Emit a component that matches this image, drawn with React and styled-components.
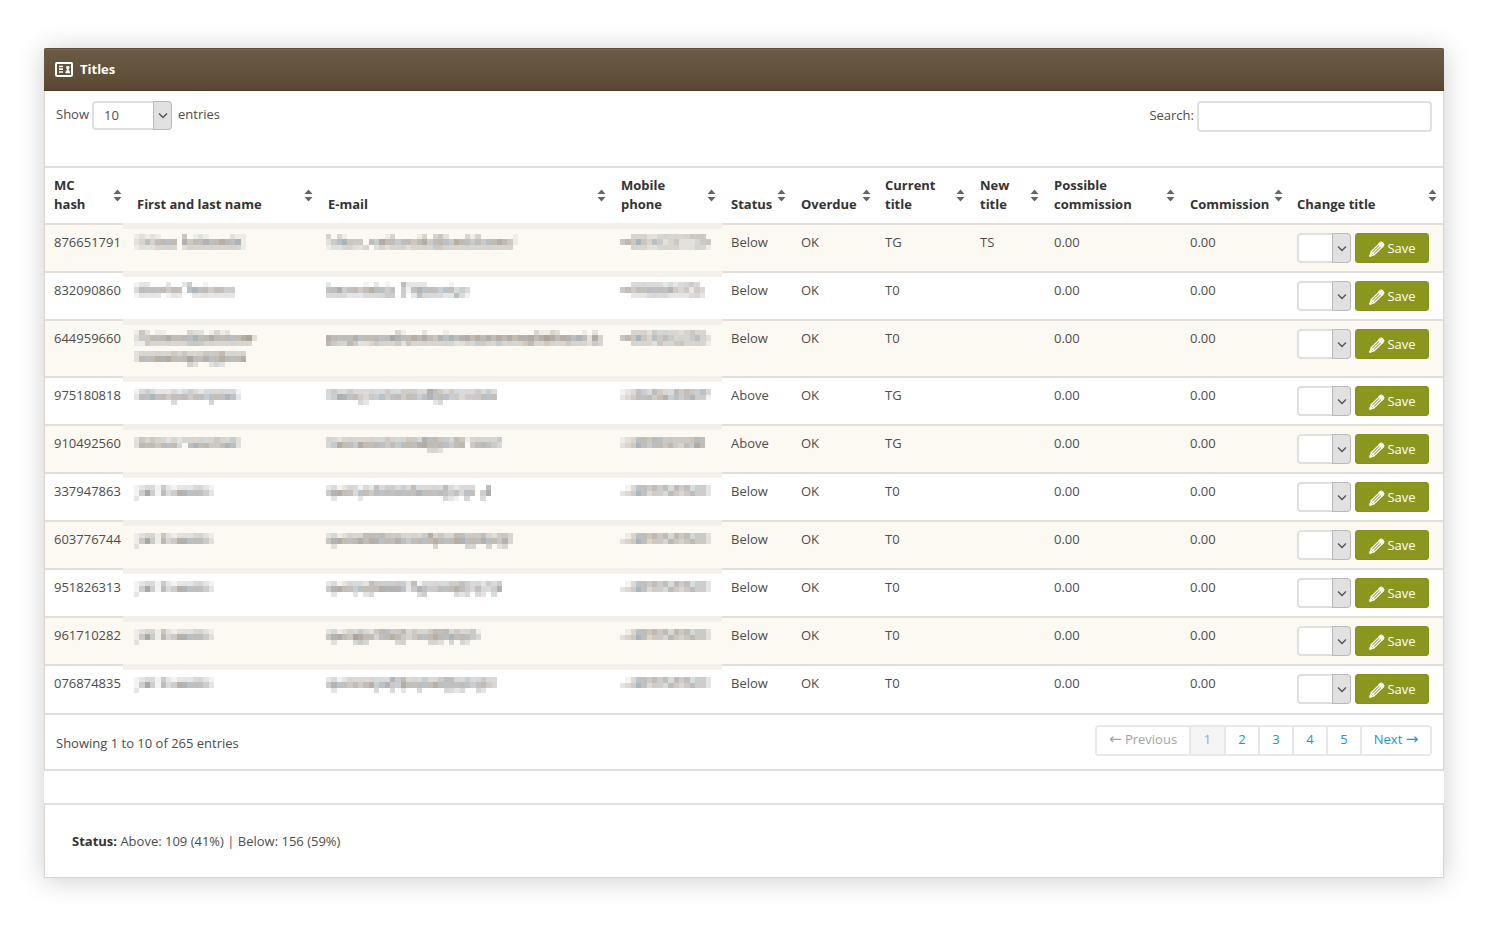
import React from "react";
import styled, { createGlobalStyle, css } from "styled-components";

const line = "#d9d2cd";
const softLine = "#e4deda";

const GlobalStyle = createGlobalStyle`
  * { box-sizing: border-box; }
  body {
    margin: 0;
    background: #fff;
    color: #4c4c4c;
    font-family: "Open Sans", "Noto Sans", sans-serif;
    font-size: 13px;
    line-height: 19px;
  }
`;

const Page = styled.main`
  padding: 48px 45px 51px 44px;
`;

const Sheet = styled.div`
  display: flex;
  flex-direction: column;
  gap: 32px;
  background: #fff;
  border-radius: 2px 2px 0 0;
  box-shadow: 0 2px 28px rgba(0, 0, 0, 0.2);
`;

const Panel = styled.section`
  border: 1px solid ${line};
  border-top: 0;
  border-bottom: 2px solid ${softLine};
`;

const PanelHeader = styled.header`
  display: flex;
  align-items: center;
  gap: 7px;
  height: 43px;
  margin: 0 -1px;
  padding: 0 11px 1px;
  color: #fff;
  background: linear-gradient(#6c5b46, #5a4932);
  border-top: 1px solid #5f4f3a;
  border-bottom: 1px solid #4c3c26;
  border-radius: 2px 2px 0 0;
  box-shadow: inset 0 1px 0 #776751;
`;

const PanelTitle = styled.h1`
  margin: 0;
  font-size: 13px;
  line-height: 19px;
  font-weight: 700;
`;

const Toolbar = styled.div`
  display: flex;
  justify-content: space-between;
  align-items: flex-start;
  height: 75px;
  padding: 10px 11px 0;
`;

const Field = styled.label`
  display: flex;
  align-items: flex-start;
  gap: 3px;
  line-height: ${(p) => p.$line}px;
  white-space: nowrap;
`;

const SearchInput = styled.input`
  width: 235px;
  height: 31px;
  padding: 4px 8px;
  border: 2px solid #e0e0e0;
  border-radius: 4px;
  background: #fff;
  color: inherit;
  font: inherit;
`;

const SelectBox = styled.span`
  display: inline-grid;
  width: ${(p) => p.$width}px;
  height: ${(p) => p.$height}px;
  margin-right: ${(p) => p.$after || 0}px;
  line-height: 19px;
`;

const Select = styled.select`
  grid-area: 1 / 1;
  appearance: none;
  width: 100%;
  height: 100%;
  padding: 0 20px 0 10px;
  border: 2px solid #e0e0e0;
  border-radius: 4px;
  background: #fff;
  color: inherit;
  font: inherit;
`;

const SelectArrow = styled.span`
  grid-area: 1 / 1;
  justify-self: end;
  display: flex;
  align-items: center;
  justify-content: center;
  width: 19px;
  border: 1px solid #b9b9b9;
  border-radius: 0 4px 4px 0;
  background: #e1e1e1;
  pointer-events: none;
`;

const Table = styled.table`
  width: 100%;
  table-layout: fixed;
  border-collapse: separate;
  border-spacing: 0;
  border-bottom: 2px solid ${softLine};
`;

const HeadCell = styled.th`
  height: 57px;
  padding: 8px 6px 9px 9px;
  border-top: 2px solid ${softLine};
  text-align: left;
  vertical-align: bottom;
  color: #333;
  font-weight: 700;
`;

const HeadContent = styled.div`
  display: flex;
  align-items: flex-end;
  justify-content: space-between;
  gap: 5px;
  height: 38px;
`;

const SortButton = styled.button`
  display: flex;
  flex: none;
  align-self: center;
  padding: 0;
  border: 0;
  background: none;
`;

const Row = styled.tr`
  height: ${(p) => (p.$tall ? 57 : 48)}px;
  background: ${(p) => (p.$odd ? "#fcf9f2" : "#fff")};
  &:last-child { height: 49px; }
`;

const Cell = styled.td`
  padding: 8px 0 0 9px;
  border-top: 2px solid ${softLine};
  vertical-align: top;
`;

const HiddenCell = styled(Cell)`
  position: relative;
  padding: ${(p) => (p.$low ? 11 : 9)}px 0 0 ${(p) => p.$indent}px;
  border-top-color: transparent;
  line-height: 0;
  &::before {
    content: "";
    position: absolute;
    top: -2px;
    left: 0;
    right: 0;
    height: 6px;
    background: #f3f0ec;
    ${(p) => p.$first && css`left: -5px;`}
  }
`;

const Mosaic = styled.svg`
  display: block;
  margin-bottom: 5px;
`;

const ChangeForm = styled.div`
  display: flex;
  gap: 4px;
`;

const SaveButton = styled.button`
  display: flex;
  align-items: center;
  justify-content: center;
  gap: 2px;
  width: 74px;
  height: 30px;
  padding: 0;
  border: 1px solid #83911a;
  border-radius: 3px;
  background: #8a961e;
  color: #fff;
  font: inherit;
`;

const Footer = styled.footer`
  display: flex;
  justify-content: space-between;
  align-items: flex-start;
  height: 54px;
  padding: 10px 11px 0;
`;

const Info = styled.p`
  margin: 0;
  padding-top: 9px;
`;

const Pager = styled.nav`
  display: flex;
  height: 31px;
  border: 2px solid #e8e8e8;
  border-radius: 4px;
  overflow: hidden;
`;

const PageLink = styled.a`
  width: ${(p) => p.$width}px;
  padding-top: 3px;
  text-align: center;
  white-space: nowrap;
  text-decoration: none;
  color: ${(p) => (p.$muted ? "#a3a3a3" : "#1b95d4")};
  background: ${(p) => (p.$current ? "#f5f5f5" : "#fff")};
  & + & { border-left: 2px solid #e8e8e8; }
`;

const Arrow = styled.span`
  font-family: "DejaVu Sans", sans-serif;
  font-size: 15px;
  line-height: 1;
`;

const Summary = styled.section`
  padding: 27px 27px 26px;
  border: 1px solid ${line};
  border-top: 2px solid ${softLine};
`;

const SummaryText = styled.p`
  margin: 0;
  strong { color: #333; }
`;

const columns = [
  ["MC hash", 83],
  ["First and last name", 191],
  ["E-mail", 293],
  ["Mobile phone", 110],
  ["Status", 70],
  ["Overdue", 84],
  ["Current title", 95],
  ["New title", 74],
  ["Possible commission", 136],
  ["Commission", 107],
  ["Change title", 155],
];

/* Each string is one line of blocks; a digit is the darkness of a block. */
const kowal = ["123314212223321", "147415346655542", "200000000000000"];
const phone = ["01355454535453442", "23465344354345442"];

const rows = [
  { id: "876651791", status: "Below", title: "TG", next: "TS",
    name: ["121210000401210000211", "235355550645565565561", "122233330233333333331"],
    mail: ["303100000001300001303420003130000001", "245644405465545545645554655454556541", "122332230232333233334433333333333330"],
    tel: ["00333223333334440", "45464354234222344", "00333223333222331"] },
  { id: "832090860", status: "Below", title: "T0",
    name: ["1220002002400100000", "3555554550565545544", "1222201220022222222"],
    mail: ["200000010201005222200001000", "556455456554504156555455343", "333322233334404025333322531"],
    tel: ["0033333323233430", "4545555556434243", "0022233332222332"] },
  { id: "644959660", tall: true, status: "Below", title: "T0",
    name: ["14201100003220131200000", "24455565555655655555672", "11433333334443333333330"],
    name2: ["233333343433344453333", "255566655575565565556", "000000000032002320000"],
    mail: ["0000000000000310002000100000000000000003113200001020", "6555565555557655656546565665656565656665676566565263", "5433542234333424333333332233443343333453343334333243"],
    tel: ["00333243333234330", "45464354543334532", "00333324334433331"] },
  { id: "975180818", low: true, status: "Above", title: "TG",
    name: ["13432223234323333331", "25565545554554555652", "00000003000000300000"],
    mail: ["343343333334334443365434333343430", "346655434454554554565554434445550", "000000320000000000002300000000000"],
    tel: ["12354354335454453", "23455545645456441"] },
  { id: "910492560", low: true, status: "Above", title: "TG",
    name: ["24343323233333343342", "25554555305655445652"],
    mail: ["332333333334333443655443541333334", "346554655554545556655554550455543", "000000000000000000033200000000000"],
    tel: ["1235545544444455", "2346545545435465"] },
  { id: "337947863", low: true, status: "Below", title: "T0", name: kowal,
    mail: ["2312331325344343533333532333005", "4665535545555555565555545355046", "0200002000000000000000321030030"], tel: phone },
  { id: "603776744", low: true, status: "Below", title: "T0", name: kowal,
    mail: ["23123335555444333346343355444532443", "46655565665556545555655566555655463", "02000000000000000000300000330030230"], tel: phone },
  { id: "951826313", low: true, status: "Below", title: "T0", name: kowal,
    mail: ["231233325444444251333334454332434", "466554555566665246544555654353346", "020002023000000003400000323032030"], tel: phone },
  { id: "961710282", low: true, status: "Below", title: "T0", name: kowal,
    mail: ["23123343245544534334555343341", "46654765535565434555655655543", "02000343000003300003320303200"], tel: phone },
  { id: "076874835", low: true, status: "Below", title: "T0", name: kowal,
    mail: ["23123333333364533343345533433433", "46554545645644655555655555545543", "02000000030030200300003323003200"], tel: phone },
];

const tones = ["#8f8f92", "#948a80", "#83929c", "#8c8681"];

function Hidden({ blocks }) {
  const cols = blocks[0].length;
  return (
    <Mosaic
      width={Math.round((cols * 16) / 3)}
      height={Math.round((blocks.length * 16) / 3)}
      viewBox={`0 0 ${cols} ${blocks.length}`}
      preserveAspectRatio="none"
      shapeRendering="crispEdges"
      aria-hidden="true"
    >
      {blocks.flatMap((row, y) =>
        [...row].map((d, x) =>
          d === "0" ? null : (
            <rect
              key={`${x}-${y}`}
              x={x}
              y={y}
              width="1"
              height="1"
              fill={tones[(x * 7 + y * 3 + Number(d)) % 4]}
              opacity={Number(d) / 9}
            />
          )
        )
      )}
    </Mosaic>
  );
}

const Chevron = () => (
  <svg width="10" height="7" viewBox="0 0 10 7" fill="none" stroke="#555" strokeWidth="1.4" aria-hidden="true">
    <path d="M1 1.500l4 4 4-4" />
  </svg>
);

const SortIcon = () => (
  <svg width="9" height="13" viewBox="0 0 9 13" fill="#666" aria-hidden="true">
    <path d="M4.500 0.500L8.500 5H0.500zM0.500 8h8L4.500 12.500z" />
  </svg>
);

const CardIcon = () => (
  <svg width="18" height="15" viewBox="0 0 18 15" fill="none" aria-hidden="true">
    <rect x="1" y="1" width="16" height="13" rx="1" stroke="#fff" strokeWidth="2" />
    <path d="M4 4.500h4M4 7.200h4M4 10h4M10.500 10.300h4.500M11.300 9h3" stroke="#fff" strokeWidth="1.700" />
    <circle cx="12.800" cy="5.500" r="1.800" fill="#fff" />
    <path d="M12 6h1.700v4H12z" fill="#fff" />
  </svg>
);

const PencilIcon = () => (
  <svg width="17" height="17" viewBox="-1 -1 17 17" fill="none" stroke="#fff" strokeWidth="1.300" strokeLinejoin="round" aria-hidden="true">
    <path d="M1 15l1.200-4.200L11.300 1.700q1-1 2 0l1 1q1 1 0 2L5.200 13.800z" />
    <path d="M2.200 10.800l3 3M4.200 11.800l7.300-7.300" />
    <path d="M1 15l.6-2.200 1.600 1.600zM10 3l1.500-1.500 3 3L13 6z" fill="#fff" />
  </svg>
);

function Dropdown({ label, value, width, height, after, id }) {
  return (
    <SelectBox $width={width} $height={height} $after={after}>
      <Select id={id} aria-label={label} defaultValue={value}>
        <option value={value}>{value}</option>
      </Select>
      <SelectArrow><Chevron /></SelectArrow>
    </SelectBox>
  );
}

export default function App() {
  return (
    <Page>
      <GlobalStyle />
      <Sheet>
        <Panel>
          <PanelHeader>
            <CardIcon />
            <PanelTitle>Titles</PanelTitle>
          </PanelHeader>
          <Toolbar>
            <Field $line={27} htmlFor="length">
              Show
              <Dropdown id="length" value="10" width={80} height={29} after={3} />
              entries
            </Field>
            <Field $line={29} htmlFor="search">
              Search:
              <SearchInput id="search" type="search" />
            </Field>
          </Toolbar>
          <Table>
            <colgroup>
              {columns.map(([name, width]) => <col key={name} width={width} />)}
            </colgroup>
            <thead>
              <tr>
                {columns.map(([name]) => (
                  <HeadCell key={name} scope="col">
                    <HeadContent>
                      {name}
                      <SortButton type="button" aria-label={`Sort by ${name}`}><SortIcon /></SortButton>
                    </HeadContent>
                  </HeadCell>
                ))}
              </tr>
            </thead>
            <tbody>
              {rows.map((r, i) => (
                <Row key={r.id} $odd={i % 2 === 0} $tall={r.tall}>
                  <Cell>{r.id}</Cell>
                  <HiddenCell $first $low={r.low} $indent={6}>
                    <Hidden blocks={r.name} />
                    {r.name2 && <Hidden blocks={r.name2} />}
                  </HiddenCell>
                  <HiddenCell $low={r.low} $indent={7}><Hidden blocks={r.mail} /></HiddenCell>
                  <HiddenCell $low={r.low} $indent={8}><Hidden blocks={r.tel} /></HiddenCell>
                  <Cell>{r.status}</Cell>
                  <Cell>OK</Cell>
                  <Cell>{r.title}</Cell>
                  <Cell>{r.next}</Cell>
                  <Cell>0.00</Cell>
                  <Cell>0.00</Cell>
                  <Cell>
                    <ChangeForm>
                      <Dropdown label={`New title for ${r.id}`} value="" width={54} height={30} />
                      <SaveButton type="button"><PencilIcon />Save</SaveButton>
                    </ChangeForm>
                  </Cell>
                </Row>
              ))}
            </tbody>
          </Table>
          <Footer>
            <Info>Showing 1 to 10 of 265 entries</Info>
            <Pager aria-label="Table pages">
              <PageLink href="#prev" $width={92} $muted><Arrow>←</Arrow> Previous</PageLink>
              <PageLink href="#1" $width={35} $muted $current>1</PageLink>
              <PageLink href="#2" $width={34}>2</PageLink>
              <PageLink href="#3" $width={34}>3</PageLink>
              <PageLink href="#4" $width={34}>4</PageLink>
              <PageLink href="#5" $width={34}>5</PageLink>
              <PageLink href="#next" $width={70}>Next <Arrow>→</Arrow></PageLink>
            </Pager>
          </Footer>
        </Panel>
        <Summary>
          <SummaryText><strong>Status:</strong> Above: 109 (41%) | Below: 156 (59%)</SummaryText>
        </Summary>
      </Sheet>
    </Page>
  );
}
